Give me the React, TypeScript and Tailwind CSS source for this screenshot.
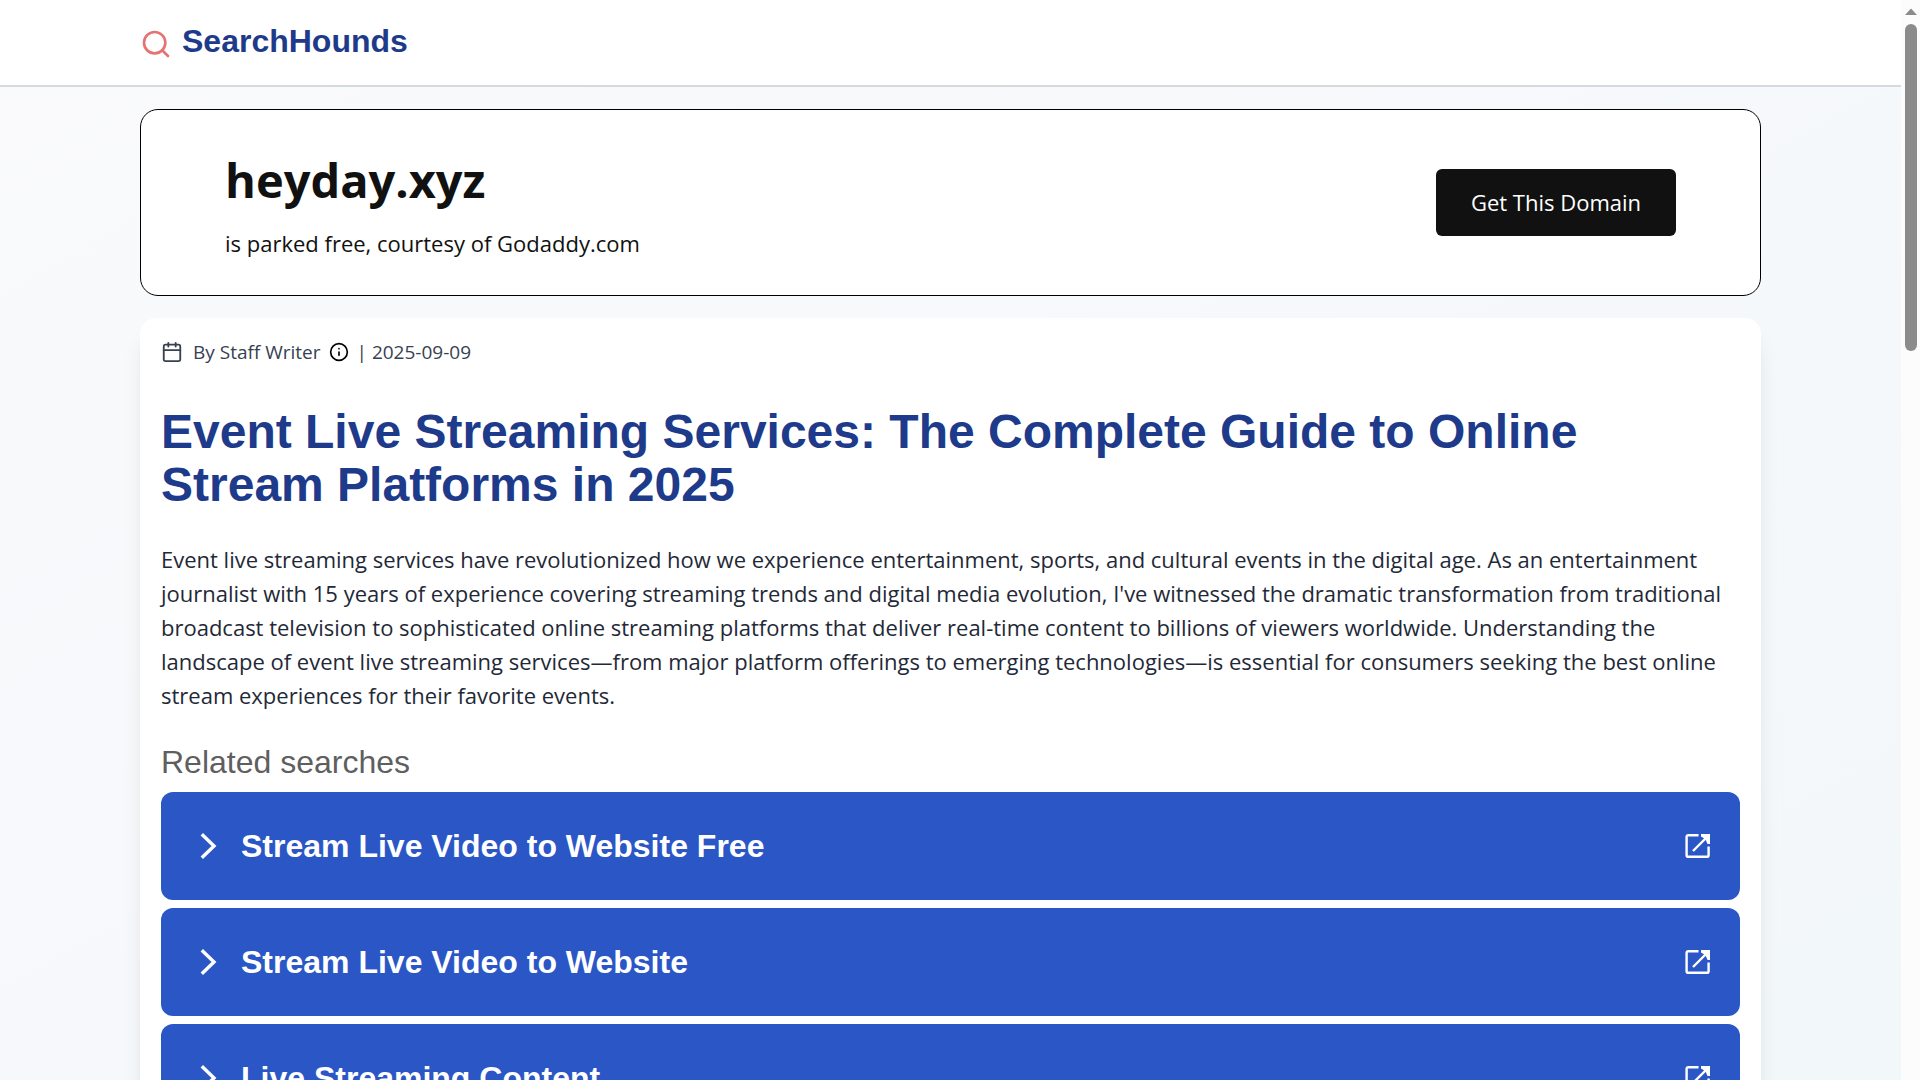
import { FiCalendar, FiInfo, FiSearch } from "react-icons/fi";

const relatedSearches = [
  "Stream Live Video to Website Free",
  "Stream Live Video to Website",
  "Live Streaming Content",
];

const ChevronIcon = () => (
  <svg
    width="17"
    height="26"
    viewBox="0 0 17 26"
    fill="none"
    stroke="currentColor"
    strokeWidth="3.4"
    className="shrink-0"
  >
    <path d="M1.8 1.2 L14 13 L1.8 24.8" />
  </svg>
);

const OpenInNewIcon = () => (
  <svg
    width="26"
    height="26"
    viewBox="0 0 26 26"
    fill="none"
    stroke="currentColor"
    strokeWidth="2.4"
    className="shrink-0"
  >
    <path d="M13.5 2.2 H3.2 a1.6 1.6 0 0 0 -1.6 1.6 V22.2 a1.6 1.6 0 0 0 1.6 1.6 H22 a1.6 1.6 0 0 0 1.6 -1.6 V13.5" />
    <path d="M8 18 L22 4" />
    <path
      d="M16 1 H25 V11 H22.5 L21 7.5 L18.5 5 L16 3.4 Z"
      fill="currentColor"
      stroke="none"
    />
  </svg>
);

const Header = () => (
  <header className="relative bg-white border-b-2 border-[#d5dade] shrink-0">
    <div className="px-[140px] h-[85px] flex items-center">
      <a href="#" className="flex items-end gap-[10px] pb-1">
        <FiSearch className="w-8 h-8 mb-px text-[#e57373]" />
        <span className="font-['Liberation_Sans',sans-serif] text-[32px] leading-10 font-bold text-[#1e3a8a]">
          SearchHounds
        </span>
      </a>
    </div>
  </header>
);

const DomainBanner = () => (
  <section className="flex items-center justify-between bg-white border border-black rounded-[18px] px-[84px] h-[187px] text-[#111]">
    <div>
      <h2 className="text-[47px] leading-[66px] font-bold">heyday.xyz</h2>
      <p className="text-[22px] leading-8 mt-[14px]">
        is parked free, courtesy of Godaddy.com
      </p>
    </div>
    <button className="bg-[#111] text-white text-[22px] leading-8 w-60 h-[67px] pb-0.5 rounded-md">
      Get This Domain
    </button>
  </section>
);

const Article = () => (
  <article className="mt-[22px] bg-white rounded-2xl shadow-xl px-[21px] pt-5 pb-10">
    <div className="flex items-center text-[19px] leading-7 text-[#374151]">
      <FiCalendar className="w-[22px] h-[22px] mr-[10px]" />
      <span>By Staff Writer</span>
      <button aria-label="About the author" className="mx-2 text-black">
        <FiInfo className="w-5 h-5" />
      </button>
      <span>| 2025-09-09</span>
    </div>

    <h1 className="mt-[39px] font-['Liberation_Sans',sans-serif] text-[48px] leading-[53px] font-bold text-[#1e3a8a]">
      Event Live Streaming Services: The Complete Guide to Online Stream
      Platforms in 2025
    </h1>

    <p className="mt-[31px] text-[22px] leading-[34px] text-[#1f2937]">
      Event live streaming services have revolutionized how we experience
      entertainment, sports, and cultural events in the digital age. As an
      entertainment journalist with 15 years of experience covering streaming
      trends and digital media evolution, I've witnessed the dramatic
      transformation from traditional broadcast television to sophisticated
      online streaming platforms that deliver real-time content to billions of
      viewers worldwide. Understanding the landscape of event live streaming
      services—from major platform offerings to emerging technologies—is
      essential for consumers seeking the best online stream experiences for
      their favorite events.
    </p>

    <nav
      aria-label="Related searches"
      className="mt-[30px] font-['Liberation_Sans',sans-serif] text-[32px]"
    >
      <h2 className="leading-10 text-[#5f5f5f]">Related searches</h2>
      <ul className="mt-[10px] flex flex-col gap-2">
        {relatedSearches.map((term) => (
          <li key={term}>
            <a
              href="#"
              className="flex items-center h-[108px] pl-[39px] pr-[29px] rounded-xl bg-[#2a56c6] text-white font-bold"
            >
              <ChevronIcon />
              <span className="flex-1 ml-6">{term}</span>
              <OpenInNewIcon />
            </a>
          </li>
        ))}
      </ul>
    </nav>
  </article>
);

const Scrollbar = () => (
  <div className="w-[19px] shrink-0 bg-[#fcfcfc] flex flex-col items-center pt-2">
    <svg width="12" height="8" viewBox="0 0 12 8" fill="#8b8b8b">
      <path d="M6 0.5 L12 7 H0 Z" />
    </svg>
    <div className="mt-2 w-3 h-[327px] rounded-full bg-[#8b8b8b]" />
  </div>
);

const App = () => {
  return (
    <div className="flex h-screen overflow-hidden font-['Open_Sans',sans-serif]">
      <div className="flex-1 min-w-0 flex flex-col bg-linear-to-br from-[#fafafc] to-[#f2f7fa]">
        <Header />
        <main className="px-[140px] pt-[22px] flex-1 overflow-hidden">
          <DomainBanner />
          <Article />
        </main>
      </div>
      <Scrollbar />
    </div>
  );
};

export default App;
